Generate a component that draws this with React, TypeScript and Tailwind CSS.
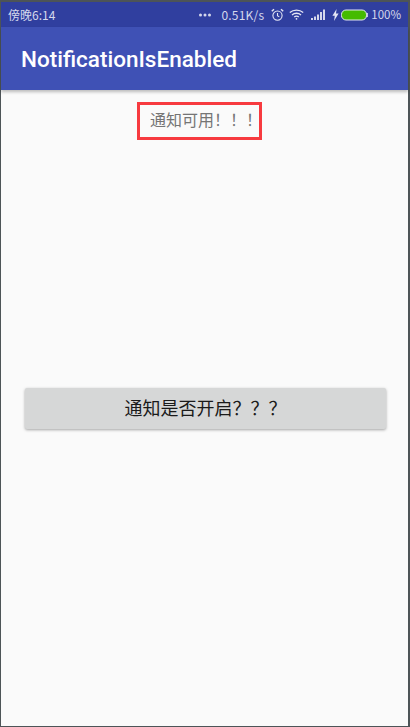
const cjk = { fontFamily: '"Noto Sans CJK SC", Roboto, sans-serif' };

const DotsIcon = () => (
  <svg width="12" height="4" viewBox="0 0 12 4" fill="#d5d8ec">
    <circle cx="1.5" cy="2" r="1.5" />
    <circle cx="6" cy="2" r="1.5" />
    <circle cx="10.5" cy="2" r="1.5" />
  </svg>
);

const AlarmIcon = () => (
  <svg width="13" height="14" viewBox="0 0 13 14" fill="none" stroke="#e4e6f4" strokeWidth="1.1">
    <circle cx="6.5" cy="7.6" r="4.6" />
    <path d="M6.5 5v2.8l1.8 1.1" />
    <path d="M0.8 3.2 3 1.2M12.2 3.2 10 1.2" strokeWidth="1.5" />
  </svg>
);

const WifiIcon = () => (
  <svg width="15" height="11" viewBox="0 0 15 11" fill="none" stroke="#e4e6f4" strokeWidth="1.3">
    <path d="M0.8 3.6C4.6 0.2 10.4 0.2 14.2 3.6" />
    <path d="M3 5.9C5.5 3.7 9.5 3.7 12 5.9" />
    <path d="M5.2 8C6.5 7 8.5 7 9.8 8" />
    <circle cx="7.5" cy="9.8" r="0.9" fill="#e4e6f4" stroke="none" />
  </svg>
);

const SignalIcon = () => (
  <svg width="15" height="11" viewBox="0 0 15 11" fill="#d5d8ec">
    <rect x="0" y="9" width="2" height="2" />
    <rect x="3" y="7.5" width="2" height="3.5" />
    <rect x="6" y="5.5" width="2" height="5.5" />
    <rect x="9" y="3" width="2" height="8" />
    <rect x="12" y="0.5" width="2" height="10.5" />
  </svg>
);

const BoltIcon = () => (
  <svg width="7" height="12" viewBox="0 0 7 12" fill="#e4e6f4">
    <path d="M4.6 0 0.4 6.8h2.4L2 12l4.6-7.4H4z" />
  </svg>
);

const BatteryIcon = () => (
  <svg width="27" height="12" viewBox="0 0 27 12">
    <rect x="0.5" y="1" width="25" height="10" rx="4.5" fill="#44bb00" stroke="#e4e6f4" />
    <rect x="25.6" y="4" width="1.2" height="4" fill="#e4e6f4" />
  </svg>
);

const App = () => {
  return (
    <div className="flex flex-col w-[410px] h-[727px] bg-[#fafafa] border-[#4d5457] border-t-2 border-l border-r-2 border-b">
      {/* status bar */}
      <div className="flex items-center justify-between h-[25px] pl-[7px] pr-[7px] bg-[#303f9f] text-[12px] text-[#d5d8ec]" style={cjk}>
        <span>傍晚6:14</span>
        <div className="flex items-center">
          <DotsIcon />
          <span className="ml-[10px] text-[12px] tracking-[0.2px]">0.51K/s</span>
          <span className="ml-[7px]"><AlarmIcon /></span>
          <span className="ml-[5px]"><WifiIcon /></span>
          <span className="ml-[7px]"><SignalIcon /></span>
          <span className="ml-[6px]"><BoltIcon /></span>
          <span className="ml-[2px]"><BatteryIcon /></span>
          <span className="ml-[3px] text-[11.5px]">100%</span>
        </div>
      </div>

      {/* toolbar */}
      <div className="flex items-center h-[63px] pl-5 pt-[2px] bg-[#3f51b5] shadow-[0_2px_3px_rgba(0,0,0,0.25)]">
        <span className="text-[22.5px] font-medium text-white font-['Roboto',sans-serif]">NotificationIsEnabled</span>
      </div>

      {/* content */}
      <div className="flex flex-col items-center flex-1">
        <div className="flex items-center w-[125px] h-[38px] mt-3 -ml-[10px] pl-[10px] pb-[5px] border-[3px] border-[#f73a3f] text-[16px] text-[#757575] whitespace-nowrap" style={cjk}>
          通知可用！！！
        </div>
        <button
          className="flex items-center justify-center w-[361px] h-[41px] mt-[248px] ml-[2px] pb-[2px] rounded-[2px] bg-[#d6d7d7] text-[18px] text-[#1a1a1a] shadow-[0_1px_3px_rgba(0,0,0,0.35)]"
          style={cjk}
        >
          通知是否开启？？？
        </button>
      </div>
    </div>
  );
};

export default App;
